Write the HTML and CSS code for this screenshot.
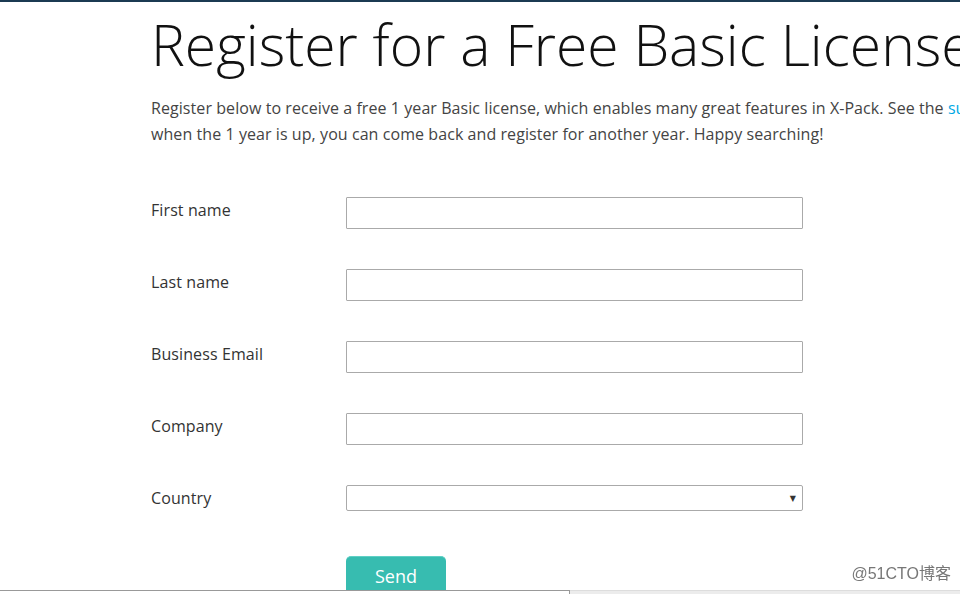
FILE: index.html
```html
<!DOCTYPE html>
<html lang="en">
<head>
  <meta charset="UTF-8" />
  <meta name="viewport" content="width=device-width, initial-scale=1.0"/>
  <title>Register for a Free Basic License</title>
  <link rel="stylesheet" href="styles.css">
</head>
<body>

<!-- Registration Page -->
<div class="page">
  <h1>Register for a Free Basic License</h1>
  <p class="intro">
    <span class="line">Register below to receive a free 1 year Basic license, which enables many great features in X-Pack. See the <a href="#">subscriptions page</a> for details. And</span>
    <span class="line">when the 1 year is up, you can come back and register for another year. Happy searching!</span>
  </p>

  <form class="form">
    <div class="row">
      <label for="firstName">First name</label>
      <input type="text" id="firstName" />
    </div>
    <div class="row">
      <label for="lastName">Last name</label>
      <input type="text" id="lastName" />
    </div>
    <div class="row">
      <label for="email">Business Email</label>
      <input type="text" id="email" />
    </div>
    <div class="row">
      <label for="company">Company</label>
      <input type="text" id="company" />
    </div>
    <div class="row">
      <label for="country">Country</label>
      <div class="select" id="country">
        <span class="arrow">&#9660;</span>
      </div>
    </div>
    <div class="actions">
      <button type="button">Send</button>
    </div>
  </form>
</div>

<div class="watermark">@51CTO博客</div>
<div class="scrollbar"><div class="track"></div></div>

</body>
</html>
```

FILE: styles.css
```css
html, body {
  margin: 0;
  padding: 0;
  overflow: hidden;
  height: 594px;
}
body {
  font-family: "Open Sans", Arial, sans-serif;
  background: white;
  color: #333;
  border-top: 2px solid #1b3a52;
  box-sizing: border-box;
}
.page {
  width: 1200px;
  padding-left: 151px;
}
h1 {
  font-weight: 300;
  font-size: 57px;
  line-height: 1;
  margin: 14px 0 0 0;
  color: #111;
  white-space: nowrap;
}
.intro {
  font-size: 16px;
  line-height: 26px;
  letter-spacing: 0.07px;
  color: #444;
  margin: 22px 0 0 0;
}
.intro .line {
  display: block;
  white-space: nowrap;
}
.intro a {
  color: #00a9e5;
  text-decoration: none;
}
.form {
  margin-top: 50px;
  width: 652px;
}
.row {
  display: flex;
  align-items: center;
  height: 32px;
  margin-bottom: 40px;
}
label {
  width: 195px;
  font-size: 16px;
  letter-spacing: 0.1px;
  color: #333;
  margin-top: -6px;
}
input {
  width: 457px;
  height: 32px;
  border: 1px solid #aaa;
  box-sizing: border-box;
  border-radius: 1px;
  margin: 0;
}
.select {
  align-self: flex-start;
  width: 457px;
  height: 26px;
  border: 1px solid #aaa;
  border-radius: 2px;
  box-sizing: border-box;
  display: flex;
  justify-content: flex-end;
  align-items: center;
  padding-right: 6px;
}
.arrow {
  font-size: 8px;
  color: #333;
  font-family: "DejaVu Sans", sans-serif;
}
.actions {
  padding-left: 195px;
  margin-top: -1px;
}
button {
  width: 100px;
  height: 44px;
  background: #37bcb0;
  color: white;
  border: none;
  border-top: 1px solid #5fd0c5;
  border-radius: 5px;
  font-family: "Open Sans", Arial, sans-serif;
  font-size: 18px;
  padding: 0 0 6px 0;
  cursor: pointer;
}
.watermark {
  position: fixed;
  right: 9px;
  bottom: 10px;
  font-family: Arial, "Noto Sans CJK SC", sans-serif;
  font-size: 16px;
  color: #777;
}
.scrollbar {
  position: fixed;
  left: 0;
  right: 0;
  bottom: 0;
  height: 3px;
  background: #ececec;
  border-top: 1px solid #ddd;
}
.track {
  width: 569px;
  height: 3px;
  margin-top: -1px;
  background: white;
  border-top: 1px solid #999;
  border-right: 1px solid #999;
}
```
